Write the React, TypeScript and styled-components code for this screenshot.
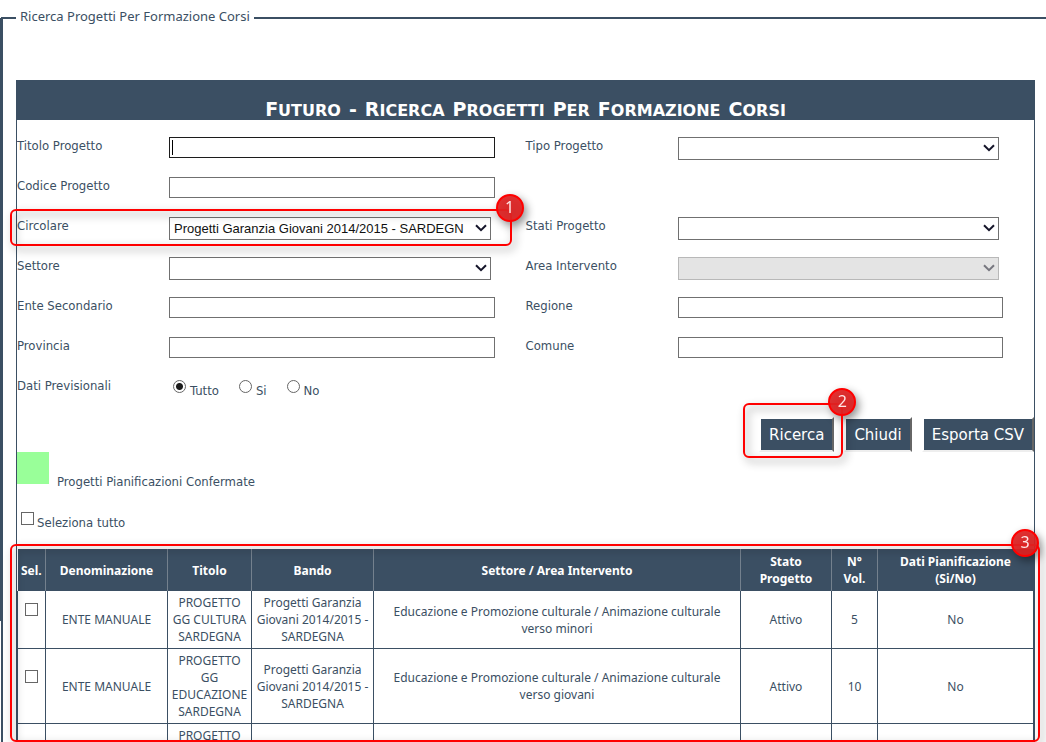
import React from "react";
import styled, { createGlobalStyle } from "styled-components";

const NAVY = "#3b4f63";
const RED = "#ff0000";

const GlobalStyle = createGlobalStyle`
  * { box-sizing: border-box; }
  body {
    margin: 0;
    background: #ffffff;
    color: ${NAVY};
    font: 13px/17px "Noto Sans", sans-serif;
  }
`;

const Page = styled.div`
  height: 100vh;
  overflow: hidden;
  padding: 8px 0 0 1px;
  background: linear-gradient(${NAVY}, ${NAVY}) no-repeat 0 18px / 1px 603px;
`;

const Frame = styled.fieldset`
  margin: 0;
  min-width: 0;
  padding: 52px 11px 0 13px;
  border: 2px solid ${NAVY};
  border-right: 0;
  border-bottom: 0;
`;

const FrameTitle = styled.legend`
  padding: 0 4px 3px;
`;

const Panel = styled.section`
  border: 1px solid ${NAVY};
`;

const PanelTitle = styled.h1`
  display: flex;
  justify-content: center;
  gap: 8px;
  height: 39px;
  margin: 0;
  padding: 17px 0 0;
  background: ${NAVY};
  color: #ffffff;
  font: bold 16px/22px "DejaVu Sans", sans-serif;
  text-transform: uppercase;
`;

const TitleWord = styled.span`
  display: block;
  &::first-letter { font-size: 19px; }
`;

const FormGrid = styled.div`
  position: relative;
  display: grid;
  grid-template-columns: 152px 1fr 152px 1fr;
  grid-template-rows: repeat(6, 40px) 24px;
  padding-top: 17px;
  font: 13px/17px "DejaVu Sans Condensed", "DejaVu Sans", sans-serif;
`;

const Label = styled.label<{ $column: number; $row: number }>`
  grid-column: ${(p) => p.$column};
  grid-row: ${(p) => p.$row};
`;

const TextInput = styled.input<{ $column: number; $row: number; $active?: boolean }>`
  grid-column: ${(p) => p.$column};
  grid-row: ${(p) => p.$row};
  width: calc(100% - 31px);
  height: 21px;
  padding: 2px 4px;
  border: 1px solid ${(p) => (p.$active ? "#1c1c1c" : "#707070")};
  border-radius: 0;
  outline: none;
  background: #ffffff;
  ${(p) => p.$active && "background: linear-gradient(#000, #000) no-repeat 2px 2px / 1px 15px; caret-color: transparent;"}
`;

const SelectBox = styled.div<{ $column: number; $row: number }>`
  grid-column: ${(p) => p.$column};
  grid-row: ${(p) => p.$row};
  display: grid;
  align-self: start;
  align-items: center;
  width: calc(100% - 35px);
  > * { grid-area: 1 / 1; }
  > svg { justify-self: end; margin: 0 4px 2px 0; pointer-events: none; }
`;

const Select = styled.select`
  appearance: none;
  width: 100%;
  height: 23px;
  padding: 0 16px 0 4px;
  border: 1px solid #707070;
  border-radius: 0;
  background: #ffffff;
  color: #111111;
  font: 13px "Liberation Sans", sans-serif;
  &:disabled { background: #e4e4e4; border-color: #b8b8b8; opacity: 1; }
`;

const RadioSet = styled.div`
  grid-column: 2;
  grid-row: 7;
  display: flex;
  gap: 20px;
  padding: 3px 0 0 4px;
`;

const Choice = styled.label`
  display: flex;
  align-items: flex-start;
  gap: 4px;
  span { margin-top: 2px; }
`;

const Radio = styled.input`
  appearance: none;
  width: 13px;
  height: 13px;
  margin: 0;
  border: 1px solid #666666;
  border-radius: 50%;
  background: #ffffff;
  &:checked { background: radial-gradient(circle, #1c1c1c 3px, #ffffff 4px); }
`;

const Checkbox = styled.input`
  appearance: none;
  width: 13px;
  height: 13px;
  margin: 0;
  border: 1px solid #666666;
  background: #ffffff;
`;

const Actions = styled.div`
  display: flex;
  justify-content: flex-end;
  gap: 10px;
  padding-top: 16px;
`;

const ActionSlot = styled.div`
  position: relative;
`;

const ActionButton = styled.button`
  display: block;
  height: 35px;
  padding: 0 8px;
  border: 2px solid;
  border-color: #ffffff #666666 #eeeeee #ffffff;
  border-radius: 0;
  background: ${NAVY};
  background-clip: padding-box;
  color: #ffffff;
  font: 15px "DejaVu Sans", sans-serif;
`;

const KeyRow = styled.div`
  display: flex;
  align-items: flex-end;
  gap: 8px;
  font: 13px/17px "DejaVu Sans Condensed", "DejaVu Sans", sans-serif;
  span { margin-bottom: -6px; }
`;

const Swatch = styled.i`
  width: 32px;
  height: 32px;
  background: #99ff99;
`;

const SelectAll = styled(Choice)`
  gap: 3px;
  padding: 28px 0 18px 4px;
  font: 13px/17px "DejaVu Sans Condensed", "DejaVu Sans", sans-serif;
`;

const Results = styled.div`
  position: relative;
`;

const Table = styled.table`
  width: 100%;
  table-layout: fixed;
  border-collapse: collapse;
  font: 12px/17px "Noto Sans", sans-serif;
`;

const Col = styled.col<{ $width?: number }>`
  width: ${(p) => (p.$width ? `${p.$width}px` : "auto")};
`;

const HeadCell = styled.th`
  height: 42px;
  padding: 4px 2px;
  border-right: 1px solid #74818e;
  background: ${NAVY};
  color: #ffffff;
  white-space: pre-line;
  &:last-child { border-right: 1px solid ${NAVY}; }
`;

const Cell = styled.td<{ $check?: boolean }>`
  padding: ${(p) => (p.$check ? "3px 3px 23px" : "3px")};
  border: 1px solid ${NAVY};
  border-top: 0;
  text-align: center;
  line-height: 17px;
  input { display: block; margin: 0 auto; }
`;

const Highlight = styled.div<{ $inset: string; $height?: number }>`
  position: absolute;
  inset: ${(p) => p.$inset};
  ${(p) => p.$height && `height: ${p.$height}px;`}
  z-index: 2;
  border: 2px solid ${RED};
  border-radius: 6px;
  filter: drop-shadow(3px 4px 4px rgba(0, 0, 0, 0.45));
  pointer-events: none;
`;

const Badge = styled.span<{ $right: number }>`
  position: absolute;
  top: -17px;
  right: ${(p) => p.$right}px;
  width: 28px;
  height: 28px;
  border: 2px solid ${RED};
  border-radius: 50%;
  background: rgba(222, 34, 34, 0.93);
  color: #ffe6e6;
  text-align: center;
  font: 16px/23px "Noto Sans", sans-serif;
`;

const FormHighlight = styled(Highlight)`
  grid-column: 1 / 3;
  grid-row: 3 / 4;
`;

function Chevron({ color = "#15152a" }: { color?: string }) {
  return (
    <svg width="12" height="8" viewBox="0 0 12 8" aria-hidden="true">
      <path d="M1 1.2 6 6.2 11 1.2" fill="none" stroke={color} strokeWidth="2" />
    </svg>
  );
}

type Field = {
  id: string;
  label: string;
  row: number;
  side: 0 | 1;
  kind: "text" | "select";
  value?: string;
  active?: boolean;
  disabled?: boolean;
};

const fields: Field[] = [
  { id: "titolo", label: "Titolo Progetto", row: 1, side: 0, kind: "text", active: true },
  { id: "tipo", label: "Tipo Progetto", row: 1, side: 1, kind: "select" },
  { id: "codice", label: "Codice Progetto", row: 2, side: 0, kind: "text" },
  { id: "circolare", label: "Circolare", row: 3, side: 0, kind: "select", value: "Progetti Garanzia Giovani 2014/2015 - SARDEGN" },
  { id: "stati", label: "Stati Progetto", row: 3, side: 1, kind: "select" },
  { id: "settore", label: "Settore", row: 4, side: 0, kind: "select" },
  { id: "area", label: "Area Intervento", row: 4, side: 1, kind: "select", disabled: true },
  { id: "ente", label: "Ente Secondario", row: 5, side: 0, kind: "text" },
  { id: "regione", label: "Regione", row: 5, side: 1, kind: "text" },
  { id: "provincia", label: "Provincia", row: 6, side: 0, kind: "text" },
  { id: "comune", label: "Comune", row: 6, side: 1, kind: "text" },
];

const columns: { title: string; width?: number }[] = [
  { title: "Sel.", width: 28 },
  { title: "Denominazione", width: 122 },
  { title: "Titolo", width: 84 },
  { title: "Bando", width: 122 },
  { title: "Settore / Area Intervento" },
  { title: "Stato\nProgetto", width: 91 },
  { title: "N°\nVol.", width: 46 },
  { title: "Dati Pianificazione\n(Si/No)", width: 156 },
];

const rows = [
  ["ENTE MANUALE", "PROGETTO GG CULTURA SARDEGNA", "Progetti Garanzia Giovani 2014/2015 - SARDEGNA", "Educazione e Promozione culturale / Animazione culturale verso minori", "Attivo", "5", "No"],
  ["ENTE MANUALE", "PROGETTO GG EDUCAZIONE SARDEGNA", "Progetti Garanzia Giovani 2014/2015 - SARDEGNA", "Educazione e Promozione culturale / Animazione culturale verso giovani", "Attivo", "10", "No"],
];

const title = "Futuro - Ricerca Progetti Per Formazione Corsi";

export default function App() {
  return (
    <Page>
      <GlobalStyle />
      <Frame>
        <FrameTitle>Ricerca Progetti Per Formazione Corsi</FrameTitle>
        <Panel>
          <PanelTitle>
            {title.split(" ").map((word) => (
              <TitleWord key={word}>{word} </TitleWord>
            ))}
          </PanelTitle>
          <FormGrid>
            {fields.map((f) => (
              <React.Fragment key={f.id}>
                <Label htmlFor={f.id} $column={f.side * 2 + 1} $row={f.row}>
                  {f.label}
                </Label>
                {f.kind === "text" ? (
                  <TextInput id={f.id} type="text" $column={f.side * 2 + 2} $row={f.row} $active={f.active} />
                ) : (
                  <SelectBox $column={f.side * 2 + 2} $row={f.row}>
                    <Select id={f.id} disabled={f.disabled}>
                      <option>{f.value}</option>
                    </Select>
                    <Chevron color={f.disabled ? "#77777f" : undefined} />
                  </SelectBox>
                )}
              </React.Fragment>
            ))}
            <Label as="span" id="previsionali" $column={1} $row={7}>
              Dati Previsionali
            </Label>
            <RadioSet role="radiogroup" aria-labelledby="previsionali">
              {["Tutto", "Si", "No"].map((name, i) => (
                <Choice key={name}>
                  <Radio type="radio" name="previsionali" defaultChecked={i === 0} />
                  <span>{name}</span>
                </Choice>
              ))}
            </RadioSet>
            <FormHighlight $inset="-8px 14px 11px -7px">
              <Badge $right={-14}>1</Badge>
            </FormHighlight>
          </FormGrid>
          <Actions>
            <ActionSlot>
              <ActionButton type="button">Ricerca</ActionButton>
              <Highlight $inset="-14px -9px -6px -16px">
                <Badge $right={-15}>2</Badge>
              </Highlight>
            </ActionSlot>
            <ActionButton type="button">Chiudi</ActionButton>
            <ActionButton type="button">Esporta CSV</ActionButton>
          </Actions>
          <KeyRow>
            <Swatch />
            <span>Progetti Pianificazioni Confermate</span>
          </KeyRow>
          <SelectAll>
            <Checkbox type="checkbox" />
            <span>Seleziona tutto</span>
          </SelectAll>
          <Results>
            <Table>
              <colgroup>
                {columns.map((c) => (
                  <Col key={c.title} $width={c.width} />
                ))}
              </colgroup>
              <thead>
                <tr>
                  {columns.map((c) => (
                    <HeadCell key={c.title} scope="col">
                      {c.title}
                    </HeadCell>
                  ))}
                </tr>
              </thead>
              <tbody>
                {rows.map((cells) => (
                  <tr key={cells[1]}>
                    <Cell $check>
                      <Checkbox type="checkbox" aria-label={cells[1]} />
                    </Cell>
                    {cells.map((text, i) => (
                      <Cell key={i}>{text}</Cell>
                    ))}
                  </tr>
                ))}
                <tr>
                  <Cell />
                  <Cell />
                  <Cell>PROGETTO</Cell>
                  <Cell />
                  <Cell />
                  <Cell />
                  <Cell />
                  <Cell />
                </tr>
              </tbody>
            </Table>
            <Highlight $inset="-5px -6px auto -7px" $height={198}>
              <Badge $right={-1}>3</Badge>
            </Highlight>
          </Results>
        </Panel>
      </Frame>
    </Page>
  );
}
